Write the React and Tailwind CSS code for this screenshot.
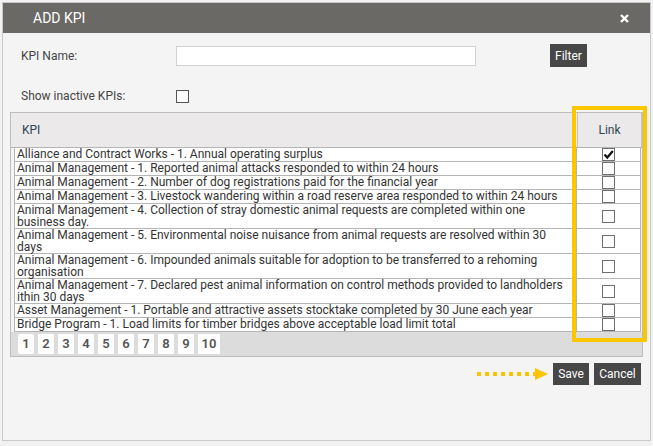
import React from 'react'

const rows = [
  { lines: ['Alliance and Contract Works - 1. Annual operating surplus'], checked: true },
  { lines: ['Animal Management - 1. Reported animal attacks responded to within 24 hours'] },
  { lines: ['Animal Management - 2. Number of dog registrations paid for the financial year'] },
  { lines: ['Animal Management - 3. Livestock wandering within a road reserve area responded to within 24 hours'] },
  { lines: ['Animal Management - 4. Collection of stray domestic animal requests are completed within one', 'business day.'] },
  { lines: ['Animal Management - 5. Environmental noise nuisance from animal requests are resolved within 30', 'days'] },
  { lines: ['Animal Management - 6. Impounded animals suitable for adoption to be transferred to a rehoming', 'organisation'] },
  { lines: ['Animal Management - 7. Declared pest animal information on control methods provided to landholders', 'ithin 30 days'] },
  { lines: ['Asset Management - 1. Portable and attractive assets stocktake completed by 30 June each year'] },
  { lines: ['Bridge Program - 1. Load limits for timber bridges above acceptable load limit total'] },
]

const pages = ['1', '2', '3', '4', '5', '6', '7', '8', '9', '10']

function Box({ checked }) {
  return (
    <div className="w-[13px] h-[13px] border border-[#6f6f6f] bg-white flex items-center justify-center">
      {checked && (
        <svg width="11" height="11" viewBox="0 0 11 11">
          <path d="M1.5 5.5 L4.3 8.5 L9.8 2" fill="none" stroke="#111" strokeWidth="2.2" />
        </svg>
      )}
    </div>
  )
}

export default function App() {
  return (
    <div className="relative w-[653px] h-[446px] overflow-hidden bg-[#f2f2f2] pt-[2px] pl-[2px]" style={{ fontFamily: 'Roboto, "Liberation Sans", sans-serif' }}>
      <div className="w-[649px] h-[439px] border border-[#c9c9c9] bg-[#f4f4f4] flex flex-col">
        {/* header */}
        <div className="h-[30px] bg-[#6b6966] flex items-center justify-between pl-[30px] pr-[21px]">
          <span className="text-white text-[14px]">ADD KPI</span>
          <svg width="9" height="9" viewBox="0 0 9 9">
            <path d="M1 1 L8 8 M8 1 L1 8" stroke="#fff" strokeWidth="2.4" />
          </svg>
        </div>

        {/* filter form */}
        <div className="px-[18px] text-[12px] text-[#444]">
          <div className="mt-[11px] flex items-center">
            <span className="w-[155px]">KPI Name:</span>
            <div className="w-[300px] h-[20px] bg-white border border-[#cfd3d6]"></div>
            <button className="ml-[74px] h-[23px] px-[5px] bg-[#474747] text-white text-[12px]">Filter</button>
          </div>
          <div className="mt-[20px] flex items-center">
            <span className="w-[155px]">Show inactive KPIs:</span>
            <div className="w-[13px] h-[13px] border border-[#555] bg-white"></div>
          </div>
        </div>

        {/* table */}
        <div className="mt-[7px] ml-[7px] w-[633px] border border-[#bdbdbd] bg-[#f4f4f4]">
          <div className="h-[35px] flex bg-[#ebe9e9] border-b border-[#b5b5b5] text-[12px] text-[#2f4556]">
            <div className="flex-1 pl-[11px] flex items-center">KPI</div>
            <div className="w-[65px] border-l border-r border-[#c4c4c4] flex items-center justify-center">Link</div>
          </div>
          <div className="ml-[3px] mr-[1px] border-l border-r border-[#b5b5b5] bg-white">
            {rows.map((r, i) => (
              <div key={i} className="flex border-b border-[#b5b5b5]">
                <div className="flex-1 pl-[2px] text-[12px] leading-[12px] text-[#333] min-h-[13px]">
                  {r.lines.map((l, j) => (
                    <div key={j} className="whitespace-nowrap">{l}</div>
                  ))}
                </div>
                <div className="w-[64px] border-l border-[#b5b5b5] flex items-center justify-center">
                  <Box checked={r.checked} />
                </div>
              </div>
            ))}
          </div>
          <div className="h-[24px] bg-[#dcdcdc] flex items-center gap-[4px] pl-[7px]">
            {pages.map((p, i) => (
              <div key={p} className={`h-[20px] ${p === '10' ? 'w-[22px]' : 'w-[16px]'} ${i === 0 ? 'rounded-[2px]' : ''} bg-white flex items-center justify-center text-[13px] font-semibold text-[#555]`}>
                {p}
              </div>
            ))}
          </div>
        </div>

        {/* actions */}
        <div className="mt-[6px] pr-[9px] flex items-center justify-end">
          <svg width="72" height="14" viewBox="0 0 72 14" className="mr-[4px]">
            <line x1="0" y1="7" x2="60" y2="7" stroke="#fcc400" strokeWidth="4" strokeDasharray="4 4" />
            <path d="M58 1 L71 7 L58 13 Z" fill="#fcc400" />
          </svg>
          <button className="h-[22px] w-[36px] bg-[#474747] text-white text-[12px]">Save</button>
          <button className="ml-[5px] h-[22px] w-[47px] bg-[#474747] text-white text-[12px]">Cancel</button>
        </div>
      </div>

      {/* highlight annotation */}
      <div className="absolute left-[572px] top-[106px] w-[75px] h-[236px] border-4 border-[#fdc700] pointer-events-none"></div>
    </div>
  )
}
